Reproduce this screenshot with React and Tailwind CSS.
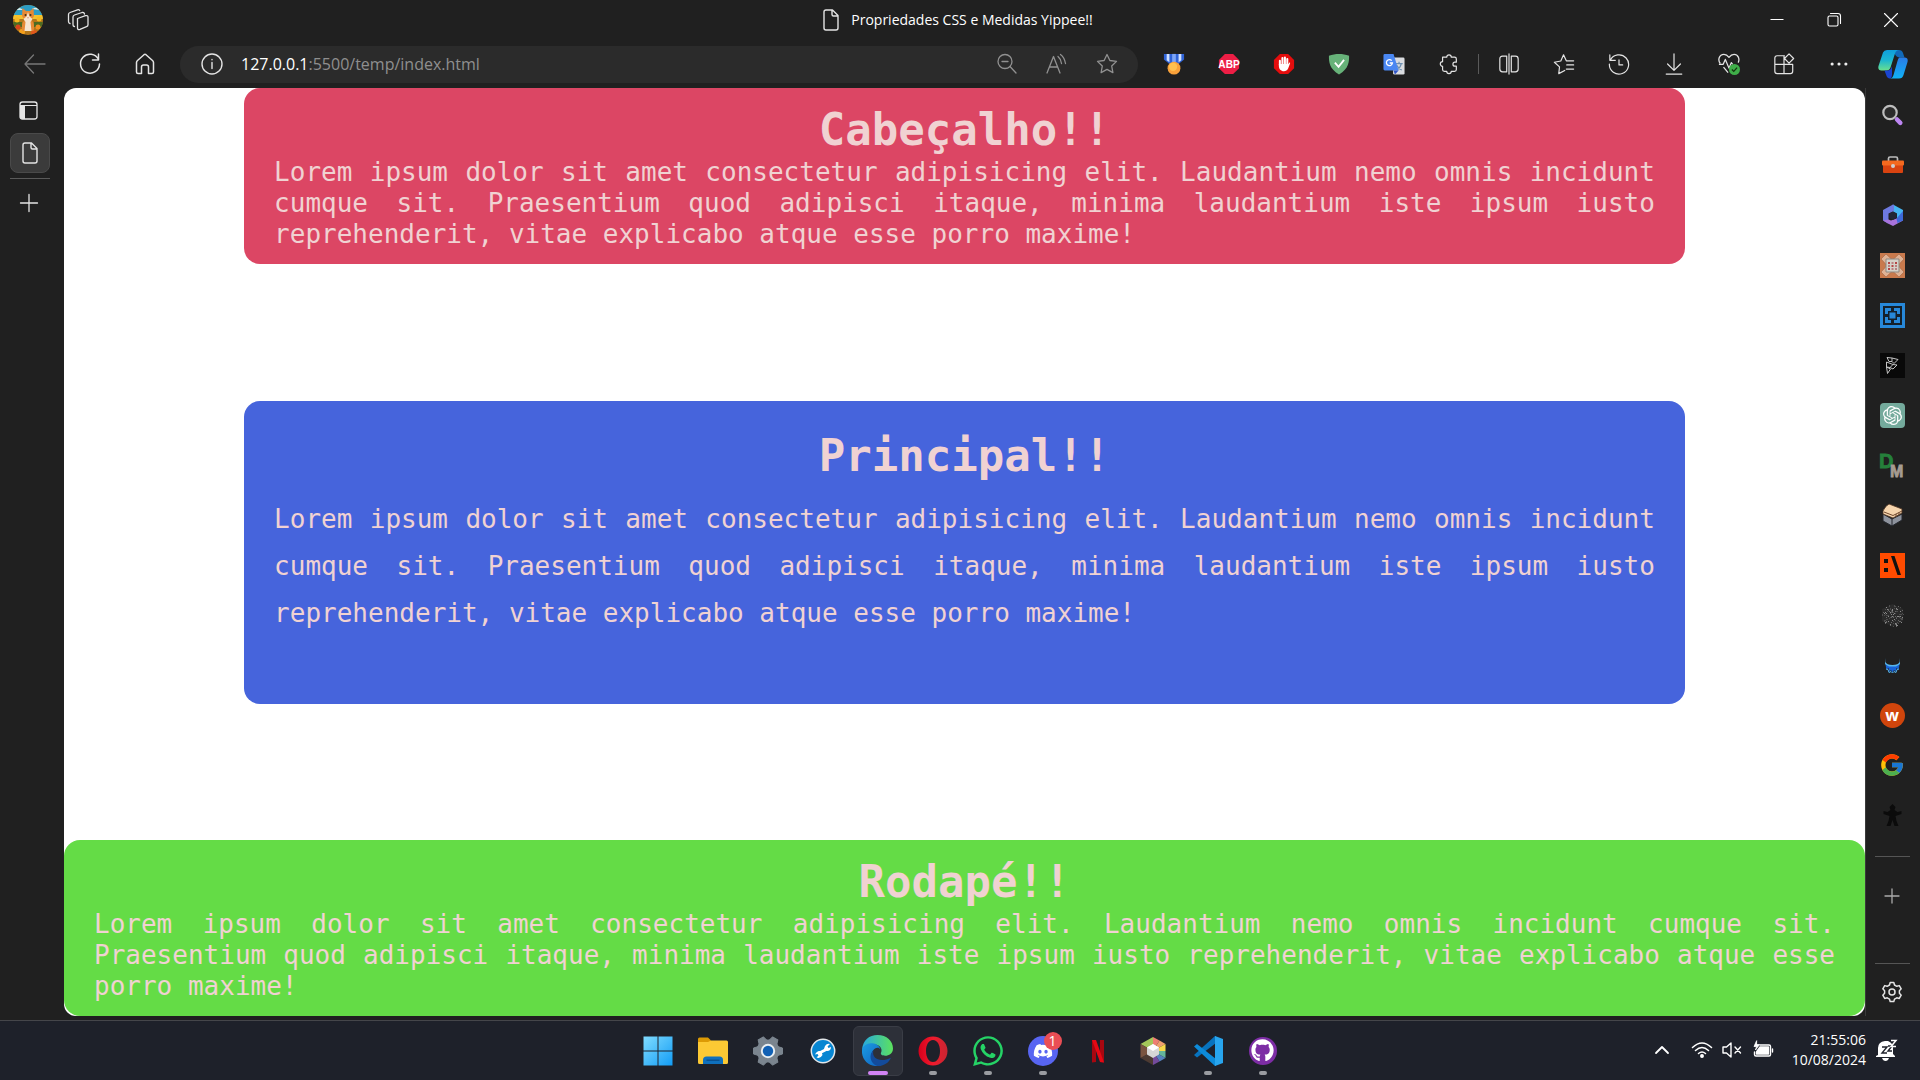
import React from "react";
import { FaWhatsapp, FaDiscord, FaGithub } from "react-icons/fa";
import { FcGoogle } from "react-icons/fc";
import { SiOpenai } from "react-icons/si";

const Line = ({ children, w = 1.3, size = "size-6", color = "text-[#e4e4e4]" }) => (
  <svg viewBox="0 0 24 24" className={`${size} ${color} shrink-0`} fill="none" stroke="currentColor" strokeWidth={w} strokeLinecap="round" strokeLinejoin="round" aria-hidden="true">
    {children}
  </svg>
);

const Art = ({ children, size = "size-6", box = "0 0 24 24" }) => (
  <svg viewBox={box} className={`${size} shrink-0`} aria-hidden="true">{children}</svg>
);

const PageIcon = () => (
  <Line w={1.4}>
    <path d="M7 2h6.500L19 7.500V20a2 2 0 0 1-2 2H7a2 2 0 0 1-2-2V4a2 2 0 0 1 2-2zM13 2v4.500a1.500 1.500 0 0 0 1.500 1.500H19" />
  </Line>
);

const STAR = "M12 2.500l2.900 6 6.600.9-4.800 4.600 1.200 6.600-5.900-3.200-5.900 3.200 1.200-6.600L2.500 9.400l6.600-.9z";
const OCTAGON = "M7.500 1h9L23 7.500v9L16.500 23h-9L1 16.500v-9z";

const extensions = [
  ["Medalha", <Art>
    <path d="M1 1h22v6l-6 5H7L1 7z" fill="#2f63d8" /><path d="M4 1h3v9L4 8zM17 1h3v7l-3 2z" fill="#cfe0ff" /><path d="M10 1h4v9h-4z" fill="#7ea5f5" />
    <circle cx="12" cy="16.500" r="7" fill="#f9a13a" /><circle cx="11" cy="15" r="4.500" fill="#ffc04e" />
  </Art>],
  ["Adblock Plus", <Art>
    <path d={OCTAGON} fill="#ed1e45" />
    <text x="12" y="16" textAnchor="middle" fontSize="11" fontWeight="700" fill="#fff" fontFamily="Liberation Sans, sans-serif">ABP</text>
  </Art>],
  ["AdBlock", <Art>
    <path d={OCTAGON} fill="#e40d0d" />
    <path d="M7.500 13V8.500M10.300 12V5.500M13 12V5M15.600 12V6.500" stroke="#fff" strokeWidth="2.200" strokeLinecap="round" />
    <path d="M6.400 12h10.300l1-1.500c.8-.3 1.300.4.8 1.100L16.500 17c-1 2-2.500 3-4.500 3-3.500 0-5.600-2.500-5.600-6z" fill="#fff" />
  </Art>],
  ["AdGuard", <Art>
    <path d="M12 1C8.500 1 4.500 1.500 1 3c0 6 0 14 11 20.500C23 17 23 9 23 3 19.500 1.500 15.500 1 12 1z" fill="#67b279" />
    <path d="M7.500 10.500l4 4.500 6-7.500" fill="none" stroke="#fff" strokeWidth="2" />
  </Art>],
  ["Google Tradutor", <Art>
    <rect x="11" y="5" width="12.500" height="18.500" rx="1.500" fill="#dadce0" />
    <path d="M13.500 11.500h8M17.500 9.500v2M20 11.500c-.7 3-2.500 5.500-5 7M15 13.500c1 2 3 4 5.500 5" stroke="#6d8fb0" fill="none" strokeWidth="1.300" />
    <path d="M2 1h9.500L17 19H2a1.500 1.500 0 0 1-1.500-1.500v-15A1.500 1.500 0 0 1 2 1z" fill="#4a87f2" /><path d="M11.500 19H17l-4 4.500z" fill="#2f55c8" />
    <path d="M9.500 8.300a3.300 3.300 0 1 0 .8 2.600H7.300" stroke="#fff" strokeWidth="1.400" fill="none" />
  </Art>],
  ["Extensões", <Line><path d="M5 4.500h4.500a2.500 2.500 0 1 1 5 0H18a2 2 0 0 1 2 2V10h-1.500a2.200 2.200 0 0 0 0 4.400H20V18a2 2 0 0 1-2 2h-3.500a2.500 2.500 0 1 1-5 0H7a2 2 0 0 1-2-2v-3.500a2.500 2.500 0 1 1 0-5z" /></Line>],
];

const tools = [
  ["Dividir tela", <Line><path d="M9.500 3.500H5Q2 3.500 2 6.500v11q0 3 3 3h4.500v-17M14.500 3.500H19q3 0 3 3v11q0 3-3 3h-4.500v-17M12 1v22" /></Line>],
  ["Favoritos", <Line><path d="M6.300 22.500l.8-7.400-5.600-5 7-1.400L11.500 2l3 6.500H22.500M15 13h7.500M14.500 17.500h8M6.300 22.500l6.500-3.500" /></Line>],
  ["Histórico", <Line><path d="M2 2v6h6M2.500 8A10.500 10.500 0 1 1 1.500 12M12 7.500V13h4" /></Line>],
  ["Downloads", <Line><path d="M12 1v17.500M5 12l7 7 7-7M3.500 23h17" /></Line>],
  ["Desempenho", <Art>
    <path d="M11 21.500l-5-6M2.500 11.500C-.5 8 1 1.500 6.500 1.500c2.500 0 4.200 1.500 5.500 3.200 1.300-1.700 3-3.200 5.500-3.200 4.500 0 6.500 5 4.500 9M1 12.500h4.500L8 7l4 9.500 2.500-6 1.500 2" stroke="#e4e4e4" strokeWidth="1.400" fill="none" strokeLinejoin="round" />
    <circle cx="18" cy="18" r="6" fill="#3fae49" /><path d="M15.200 18l2 2 3.600-4" stroke="#15340f" fill="none" strokeWidth="1.400" />
  </Art>],
  ["Aplicativos", <Line><path d="M12.500 3H4.500Q2 3 2 5.500v14.500Q2 22.500 4.500 22.500h14.500q2.500 0 2.500-2.500v-7.500M2 12.500h19.500M12 3v19.500M17.500 1l5 5-5 5-5-5z" /></Line>],
  ["Mais opções", <Art><g fill="#eee"><circle cx="4.500" cy="12" r="1.700" /><circle cx="12" cy="12" r="1.700" /><circle cx="19.500" cy="12" r="1.700" /></g></Art>],
];

const speckles = Array.from({ length: 150 }, (_, i) => {
  const a = (i * 137 + i * i * 31) % 360, r = Math.sqrt(((i * 61) % 150) / 150) * 11;
  return [Math.round(12.5 + r * Math.cos(a)), Math.round(12.5 + r * Math.sin(a)), i % 4];
});

const apps = [
  ["Pesquisar", <Art box="0 0 25 25" size="size-[25px]"><circle cx="10" cy="9.500" r="6.700" fill="#2b2b2b" stroke="#bdbdbd" strokeWidth="2.200" /><path d="M17 16.500l3.300 3.300" stroke="#bd86f2" strokeWidth="4.500" strokeLinecap="round" /></Art>],
  ["Ferramentas", <Art box="0 0 25 25" size="size-[25px]"><path d="M8.500 8V5.500q0-1.500 1.500-1.500h6q1.500 0 1.500 1.500V8" fill="none" stroke="#bcbcbc" strokeWidth="1.700" /><rect x="3" y="8" width="20" height="12" rx="1" fill="#d94310" /><rect x="2" y="7.500" width="22" height="5" rx="1" fill="#f4691f" /><circle cx="13" cy="13" r="2" fill="#cfcfcf" /></Art>],
  ["Microsoft 365", <Art box="0 0 25 25" size="size-[25px]"><path d="M13 1.500l10 5.500v7.500L17 16v-5.500L10 7z" fill="#45b5f2" /><path d="M13 1.500L3 7v10.500l5.500 3.200V10.500L14 8V2z" fill="#6d79e0" /><path d="M3 17.500l5 3 5 2.500 10-5.500V11l-5 4-7 2.500-2.500-1z" fill="#a873dc" /><path d="M23 8v9.500L17.500 20l-1-4.500z" fill="#3e69d8" /><path d="M13 8.500l3.700 2v4.300L13 17l-3.700-2.200v-4.300z" fill="#222736" /></Art>],
  ["Comandos", <Art box="0 0 25 25" size="size-[25px]"><path d="M0 0h25v25H0z" fill="#c97a4d" /><path d="M1 6l5-5 6.500 6L19 1l5 5-6 6.500 6 6.500-5 5-6.500-6L6 24l-5-5 6-6.500z" fill="#dfb295" stroke="#a96a48" strokeWidth=".7" /><path d="M6 6h13v13H6z" fill="#d5d1c8" stroke="#8d8780" /><path d="M8 9h2v2H8zM15 9h2v2h-2zM11.500 12h2v2h-2zM8 15h2v2H8z" fill="#b54444" /><path d="M11.500 9h2v2h-2zM8 12h2v2H8zM15 12h2v2h-2zM11.500 15h2v2h-2zM15 15h2v2h-2z" fill="#b98080" /></Art>],
  ["Blocos", <Art box="0 0 25 25" size="size-[25px]"><path d="M0 0h25v25H0z" fill="#2788d9" /><path d="M3 3h19v19H3z" fill="#14202b" /><path d="M5 5h6v3H8v3H5zM14 5h6v6h-3V8h-3zM5 14h3v3h3v3H5zM17 14h3v6h-6v-3h3zM9.500 9.500h6v6h-6z" fill="#2788d9" /></Art>],
  ["Editor", <Art box="0 0 25 25" size="size-[25px]"><path d="M0 0h25v25H0z" fill="#090909" /><path d="M7 4.500l5 .5v3.500H9zM12 5l6 1.500-4 4-2-2M6.500 9l6.500 2.500-3 3-3.500-.5zM13 11.500l4 .5-4 4-3-1.500M6.500 14l4 2-3 4.500z" fill="none" stroke="#c4c4c4" strokeWidth="1" strokeLinejoin="round" /></Art>],
  ["ChatGPT", <span className="grid size-[25px] place-items-center rounded bg-[#74aa9c] text-white"><SiOpenai className="size-[19px]" /></span>],
  ["DM", <Art box="-4 -4 33 33" size="size-[33px]"><g fontFamily="Liberation Sans, sans-serif" fontWeight="700" strokeWidth=".8"><text x="-1" y="15" fontSize="20" fill="#25803b" stroke="#25803b">D</text><text x="10" y="24" fontSize="16" fill="#a69c92" stroke="#a69c92">M</text></g></Art>],
  ["Pão", <Art box="0 0 25 25" size="size-[25px]"><path d="M3 11l9 5 10-5v6l-10 6-9-5z" fill="#8d929c" stroke="#24272d" /><path d="M12 16v7" stroke="#24272d" /><path d="M3 8q2-5 6-7l13 5v4l-9 5L3 11z" fill="#f6d5ad" stroke="#4c3221" strokeWidth=".8" /><path d="M4 9l9 3.500 9-4.500M16 11v3M19 9.500v3" stroke="#70482d" fill="none" /></Art>],
  ["Terminal", <Art box="0 0 25 25" size="size-[25px]"><path d="M0 0h25v25H0z" fill="#ff4b00" /><path d="M4 6h4v4H4zM4 15h4v4H4zM11 3h3.500L21 22h-3.500z" fill="#111" /></Art>],
  ["Cubo", <Art box="0 0 25 25" size="size-[25px]"><path d="M12.500 1L23 6v12l-10.500 6L2 18V6z" fill="#2b2b2b" />{speckles.map(([x, y, k], i) => <rect key={i} x={x} y={y} width="1" height="1" fill={k === 0 ? "#8b8b8b" : k === 1 ? "#666" : "#4d4d4d"} />)}</Art>],
  ["Coroa", <Art box="0 0 25 25" size="size-[25px]"><path d="M5.500 5v4q1 3 7 3t7-3V5l.5 6-3 3h-9l-3-3z" fill="#57b6ed" /><path d="M5.500 11.500l3.500 2h7l3.500-2-1 5-2-1.500-1 3.500-1.500-1.500-1.500 2.500-1.500-2.500L9.500 18.500l-1-3.500-2 1.500z" fill="#1763d8" /><path d="M6 16l2 .5 1 3 2-1 1.500 1.500 1.500-1.500 2 1 1-3 2-.5" fill="none" stroke="#57b6ed" /></Art>],
  ["W", <span className="grid size-[25px] place-items-center rounded-full bg-[#d0450c] font-['Open_Sans',sans-serif] text-base font-bold leading-4 text-white">w</span>],
  ["Google", <FcGoogle className="size-[26px]" />],
  ["Figura", <Art box="0 0 25 25" size="size-[25px]"><path d="M12.500 1l3 3-1 3 3 2 4-1v3l-6 2 1 5 2 5h-4l-2-6-2 6h-4l2-5 1-5-6-2V8l4 1 3-2-1-3z" fill="#0b0b0b" /></Art>],
];

const GEAR = "M9.500 3.500L10.200 1h3.600l.7 2.500 2.300 1.300 2.500-.7 1.900 3.200-1.800 1.900v2.600l1.800 1.900-1.900 3.200-2.500-.6-2.300 1.300-.7 2.500h-3.600l-.7-2.500-2.300-1.300-2.500.6-1.900-3.200 1.800-1.900V9.200L2.800 7.300l1.900-3.200 2.500.7z";

const taskbar = [
  ["Iniciar", <Art box="0 0 30 30" size="size-[30px]"><defs><linearGradient id="win" x1="0" y1="0" x2="1" y2="1"><stop stopColor="#80dcff" /><stop offset="1" stopColor="#129cf5" /></linearGradient></defs><path d="M.5.5h14v14H.5zM15.500.5h14v14h-14zM.5 15.500h14v14H.5zM15.500 15.500h14v14h-14z" fill="url(#win)" /></Art>],
  ["Explorador", <Art box="0 0 30 30" size="size-[30px]"><path d="M0 3q0-1.500 1.500-1.500H10l3 3V12H0z" fill="#dc9a05" /><path d="M0 6h10l3-1.500h15.500Q30 4.500 30 6v20.500q0 1.500-1.500 1.500h-27Q0 28 0 26.500z" fill="#fcc934" /><path d="M5 28v-4q0-3.500 3.500-3.500h13Q25 20.500 25 24v4z" fill="#0f70bd" /><path d="M8.500 24.200h13" stroke="#084a86" strokeWidth="1.200" /></Art>],
  ["Configurações", <Art box="0 0 30 30" size="size-[30px]"><g transform="translate(15 15)" fill="#7b858f"><circle r="11.500" />{[0, 60, 120, 180, 240, 300].map((a) => <path key={a} transform={`rotate(${a + 30})`} d="M-4.500-9.500l1.500-5h6l1.500 5z" strokeLinejoin="round" stroke="#7b858f" />)}</g><circle cx="15" cy="15" r="7.200" fill="#e9eef2" /><circle cx="15" cy="15" r="5.200" fill="#1160b4" /></Art>],
  ["Reparo", <Art box="0 0 30 30" size="size-[30px]"><circle cx="15" cy="15" r="11.700" fill="#0786d2" stroke="#e3e7ea" strokeWidth="1.500" /><path d="M10.500 17.500L20 12.500" stroke="#fff" strokeWidth="3" /><path d="M17 10q2-3 5-2l-2.500 2.500 1 1.500L23 11q0 4-4 4l-3-2zM13.500 15.500q-4-2-6.500 3l2.500-.5 1 1.500L8.500 21.500q4 1.500 6-2.500z" fill="#fff" /></Art>],
  ["Microsoft Edge", <Art box="0 0 30 30" size="size-[31px]"><defs><linearGradient id="ea"><stop stopColor="#27a8e0" /><stop offset="1" stopColor="#5ce25d" /></linearGradient><linearGradient id="eb" x1="0" y1="0" x2="1" y2="1"><stop stopColor="#1b9de2" /><stop offset="1" stopColor="#1060c0" /></linearGradient></defs><path d="M0 14C1 5 7 0 15 0c9 0 15 6 15 13 0 5-4 7-7.500 7-3 0-5-1-4-3 2-5-3-9-9-8C5 9.500 2 12 0 14z" fill="url(#ea)" /><path d="M0 14c2-5 6-6 10-6 4 0 7 3 8 6-2-3-6-2-8 2-3 6 2 13 9 13l-3 1C7 31-1 24 0 14z" fill="url(#eb)" /><path d="M11 15c-2 8 7 12 17 7-2 5-7 8-13 8-7-2-9-11-4-15z" fill="#134b9b" /></Art>, "active"],
  ["Opera", <Art box="0 0 30 30" size="size-[30px]"><defs><linearGradient id="op"><stop stopColor="#d6001c" /><stop offset=".5" stopColor="#f01b2d" /><stop offset="1" stopColor="#c82632" /></linearGradient></defs><path fillRule="evenodd" d="M15 .5a14.500 14.500 0 1 1 0 29 14.500 14.500 0 0 1 0-29zM15 4C10.500 4 8 9 8 15s2.500 11 7 11 7-5 7-11S19.500 4 15 4z" fill="url(#op)" /></Art>, "open"],
  ["WhatsApp", <FaWhatsapp className="size-[34px] text-[#25d366]" />, "open"],
  ["Discord", <span className="relative grid size-[30px] place-items-center rounded-full bg-[#5865f2] text-white"><FaDiscord className="size-5" /><span className="absolute -right-1 -top-1 grid size-[18px] place-items-center rounded-full bg-[#ea4e55] text-sm leading-none">1</span></span>, "open"],
  ["Netflix", <Art box="0 0 30 30" size="size-[30px]"><path d="M9 4h4v22l-4 .6zM17 4h4v22.600l-4-.6z" fill="#a80710" /><path d="M9 4h4l8 22.600-4-.6z" fill="#e50914" /></Art>],
  ["Cubo colorido", <Art box="0 0 30 30" size="size-[30px]"><path d="M15 1v14L2.500 8z" fill="#a4c75a" /><path d="M15 1l6.500 3.500L15 15z" fill="#ee7f72" /><path d="M21.500 4.500L27.500 8 15 15z" fill="#f0a070" /><path d="M27.500 8v7H15z" fill="#f8d84a" /><path d="M27.500 15v7L15 15z" fill="#65b49a" /><path d="M27.500 22l-6 3.500L15 15z" fill="#5681bd" /><path d="M21.500 25.500L15 29V15z" fill="#744b9c" /><path d="M15 29L2.500 22 15 15z" fill="#4c3a32" /><path d="M2.500 8L15 15 2.500 22z" fill="#7a5440" /><path d="M15 8l6 3.500v7L15 22l-6-3.500v-7z" fill="#d6d6d6" /><path d="M15 8l6 3.500-6 3.500-6-3.500z" fill="#fff" /></Art>],
  ["Visual Studio Code", <Art box="0 0 30 30" size="size-[30px]"><path d="M1 19l3 2.500L23 7V.5L22 0z" fill="#0873be" /><path d="M1 10.500L4 8l19 15v6.500L22 30z" fill="#0d8bda" /><path d="M22 0l8 3v24l-8 3z" fill="#28a5ee" /></Art>, "open"],
  ["GitHub Desktop", <span className="grid size-7 place-items-center rounded-full bg-[#7d2da5] text-white"><FaGithub className="size-[23px]" /></span>, "open"],
];

const IconButton = ({ label, children, className = "w-[55px]" }) => (
  <button type="button" aria-label={label} className={`flex h-9 shrink-0 items-center justify-center ${className}`}>{children}</button>
);

const LOREM = "Lorem ipsum dolor sit amet consectetur adipisicing elit. Laudantium nemo omnis incidunt cumque sit. Praesentium\u00a0quod adipisci itaque, minima laudantium iste ipsum iusto reprehenderit, vitae explicabo atque esse porro maxime!";

const Lorem = ({ className = "leading-[31px]" }) => (
  <p className={`text-justify text-[26px] ${className}`}>{LOREM}</p>
);

function TitleBar() {
  return (
    <div className="grid h-10 grid-cols-[1fr_auto_1fr] items-center">
      <div className="flex items-center gap-6 pl-[13px]">
        <button type="button" aria-label="Perfil">
          <Art box="0 0 30 30" size="size-[30px]">
            <clipPath id="av"><circle cx="15" cy="15" r="15" /></clipPath>
            <g clipPath="url(#av)">
              <path d="M0 0h30v30H0z" fill="#b3761a" /><path d="M0 0h30v10H0z" fill="#2c9dc4" /><path d="M2 5q4-4 8 0zM19 4q4-3 8 1z" fill="#d9eef0" />
              <path d="M0 10h30v4H0z" fill="#f2c230" /><path d="M0 17h9v5H0zM21 17h9v5h-9z" fill="#4c6b22" />
              <circle cx="4" cy="15" r="2.500" fill="#f5b921" /><circle cx="26" cy="14" r="2.500" fill="#f5b921" /><circle cx="5" cy="22" r="2.500" fill="#d8451c" /><circle cx="25" cy="22" r="2.500" fill="#f09020" /><circle cx="9" cy="27" r="3" fill="#f5a01c" /><circle cx="21" cy="28" r="3" fill="#e0571c" />
              <path d="M9.500 3l3.500 3h4l3.500-3 .5 8-2.500 4q4 5 2 11h-11q-2-6 2-11L9 11z" fill="#e58a35" /><path d="M15 7l1.500 4.500 3 2.500-2 3 1 9h-7l1-9-2-3 3-2.500z" fill="#f5e4cf" /><circle cx="12.500" cy="10" r="1" fill="#40301c" /><circle cx="17.500" cy="10" r="1" fill="#40301c" /><path d="M14 12.500h2l-1 1z" fill="#b0604a" />
            </g>
          </Art>
        </button>
        <button type="button" aria-label="Espaços de trabalho">
          <Line><path d="M10.500 10.500l8-2.800q2.500-.7 2.500 1.500v7.500q0 1.500-1.500 2l-6.500 2.700q-2.500.8-2.500-1.500zM7.500 18.500Q6 18.500 6 16.500V9q0-1.500 1.500-2L15 4.500q2-.5 2.500 1.500M3 15.500q-1.500-.3-1.500-2V6.500q0-1.500 1.500-2l7.500-2.700q1.500-.4 2.200.7" /></Line>
        </button>
      </div>
      <h1 className="flex items-center gap-2 pr-2 text-sm text-white"><PageIcon />Propriedades CSS e Medidas Yippee!!</h1>
      <div className="flex justify-end pr-px">
        <IconButton label="Minimizar" className="w-[57px]"><Art><path d="M5.500 11.500h13" stroke="#fff" strokeWidth="1" /></Art></IconButton>
        <IconButton label="Restaurar" className="w-[57px]"><Line w={1.1} color="text-white"><rect x="6" y="8" width="10" height="10" rx="1.500" /><path d="M8.500 5.500H16q2.500 0 2.500 2.500v7.500" /></Line></IconButton>
        <IconButton label="Fechar" className="w-[57px]"><Line w={1.1} color="text-white"><path d="M5.500 5.500l13 13M18.500 5.500l-13 13" /></Line></IconButton>
      </div>
    </div>
  );
}

function Toolbar() {
  return (
    <div className="flex h-12 items-center pl-[7px] pr-px">
      <IconButton label="Voltar"><Line color="text-[#777]"><path d="M22 12H2M10.500 3L2 12l8.500 9" /></Line></IconButton>
      <IconButton label="Atualizar"><Line w={1.5}><path d="M20.500 7.500A9.500 9.500 0 1 0 21.500 12M20.500 2v6h-6" /></Line></IconButton>
      <IconButton label="Início"><Line w={1.5}><path d="M3.500 10.500Q3.500 9.500 4.500 8.500L11 2.700q1-.8 2 0l6.500 5.800q1 1 1 2V20q0 1.500-1.500 1.500h-3.500V15q0-2-2-2h-3q-2 0-2 2v6.500H5Q3.500 21.500 3.500 20z" /></Line></IconButton>
      <div className="ml-2 flex h-[37px] flex-1 items-center rounded-full bg-[#2b2b2b] pl-2">
        <IconButton label="Informações do site" className="w-12"><Line w={1.4}><circle cx="12" cy="12" r="10" /><path d="M12 10.500v6M12 7.500v.2" /></Line></IconButton>
        <a href="http://127.0.0.1:5500/temp/index.html" className="flex-1 pl-[5px] text-base text-[#8f8f8f]"><span className="text-white">127.0.0.1</span>:5500/temp/index.html</a>
        <IconButton label="Zoom" className="w-[50px]"><Line color="text-[#919191]"><circle cx="10" cy="9.500" r="7" /><path d="M7 9.500h6M15 14.500l6 6.500" /></Line></IconButton>
        <IconButton label="Ler em voz alta" className="w-[50px]"><Line color="text-[#919191]"><path d="M2 21L8.500 4.500 15 21M4.500 15h8M13 4.500q3 2.500 3.500 7M15.500 2.500q4 3 5 9" /></Line></IconButton>
        <IconButton label="Favoritar" className="mr-1.5 w-[50px]"><Line color="text-[#919191]"><path d={STAR} /></Line></IconButton>
      </div>
      <div className="flex items-center pl-2">
        {extensions.map(([label, icon]) => <IconButton key={label} label={label}>{React.cloneElement(icon, { size: "size-[22px]" })}</IconButton>)}
        <span className="mx-0.5 h-5 w-px bg-[#5a5a5a]" />
        {tools.map(([label, icon]) => <IconButton key={label} label={label}>{React.cloneElement(icon, { size: "size-[22px]" })}</IconButton>)}
        <IconButton label="Copilot" className="w-[53px]">
          <Art box="0 0 30 30" size="size-[30px]">
            <defs><linearGradient id="ca" x1="0" y1="0" x2="0" y2="1"><stop stopColor="#0f9edc" /><stop offset=".5" stopColor="#1cb6d0" /><stop offset="1" stopColor="#6ae08e" /></linearGradient><linearGradient id="cb" x1="0" y1="0" x2="0" y2="1"><stop stopColor="#2a7be6" /><stop offset="1" stopColor="#10b2f6" /></linearGradient></defs>
            <path d="M16 1h5q3 0 4 3l1.500 4.500h-5q-3 0-5-4z" fill="#1169b8" />
            <path d="M5 3.500Q6 1 9 1h12q-3 0-4 3.500l-4.500 14q-1 3-4 3H3.500Q-.5 21.500.5 17z" fill="url(#ca)" />
            <path d="M6.500 21.500h3q3 0 4-3l.5-1.500v8q0 4-2 4.500-3 0-4-4z" fill="#1a45d0" />
            <path d="M21.500 8.500h5Q30.500 8.500 29.500 13l-4 13q-1 3.500-4.500 3.500h-9.500q3 0 4-3.500l4-14q.5-3 2-3.500z" fill="url(#cb)" />
          </Art>
        </IconButton>
      </div>
    </div>
  );
}

function Page() {
  return (
    <main className="flex flex-1 flex-col items-center justify-between overflow-hidden rounded-xl bg-white font-['DejaVu_Sans_Mono',monospace] text-[#f0d2d2]">
      <header className="w-4/5 rounded-2xl bg-[#dc4664] px-[30px] pb-3.5 pt-[15px]">
        <h2 className="text-center text-[44px] font-bold leading-[54px]">Cabeçalho!!</h2>
        <Lorem />
      </header>
      <section className="w-4/5 rounded-2xl bg-[#4664dc] px-[30px] pb-[67px] pt-[15px]">
        <h2 className="text-center text-[44px] font-bold leading-[80px]">Principal!!</h2>
        <Lorem className="leading-[47px]" />
      </section>
      <footer className="w-full rounded-2xl bg-[#64dc46] px-[30px] pb-3.5 pt-[15px]">
        <h2 className="text-center text-[44px] font-bold leading-[54px]">Rodapé!!</h2>
        <Lorem />
      </footer>
    </main>
  );
}

export default function App() {
  return (
    <div className="flex min-h-screen flex-col bg-[#202020] font-['Open_Sans',sans-serif]">
      <TitleBar />
      <Toolbar />
      <div className="flex flex-1 pb-1">
        <nav aria-label="Guias" className="flex w-16 shrink-0 flex-col items-start pl-2.5">
          <button type="button" aria-label="Menu de guias" className="mt-[11px] flex w-10 justify-center pr-0.5">
            <Art><rect x="3" y="3" width="17" height="17" rx="2.500" fill="none" stroke="#e4e4e4" strokeWidth="1.300" /><path d="M3 6.500h17" stroke="#e4e4e4" /><path d="M3 7h5v13H5q-2 0-2-2z" fill="#e4e4e4" /></Art>
          </button>
          <button type="button" aria-label="Propriedades CSS e Medidas Yippee!!" className="mt-2.5 grid h-10 w-10 place-items-center rounded-lg border border-[#4a4a4a] bg-[#3b3b3b]"><PageIcon /></button>
          <span className="mt-[5px] h-px w-10 bg-[#5a5a5a]" />
          <button type="button" aria-label="Nova guia" className="mt-3 flex w-10 justify-center pr-0.5"><Line><path d="M12 3.500v17M3.500 12h17" /></Line></button>
        </nav>
        <Page />
        <aside aria-label="Barra lateral" className="flex w-[55px] shrink-0 flex-col items-center border-l border-[#3a3a3a] pr-0.5 pt-0.5">
          {apps.map(([label, icon]) => <button type="button" key={label} aria-label={label} className="grid h-[50px] w-full place-items-center">{icon}</button>)}
          <span className="mt-4 h-px w-[35px] bg-[#555]" />
          <button type="button" aria-label="Personalizar" className="mt-[27px]"><Line color="text-[#aaa]"><path d="M12 5v14M5 12h14" /></Line></button>
          <span className="mt-auto h-px w-[35px] bg-[#555]" />
          <button type="button" aria-label="Configurações da barra" className="mb-3 mt-4"><Line w={1.5}><g transform="translate(0 1.500)"><path d={GEAR} /><circle cx="12" cy="10.500" r="3" /></g></Line></button>
        </aside>
      </div>
      <div className="grid h-[60px] grid-cols-[1fr_auto_1fr] items-center border-t border-[#45464a] bg-[#1e212a] text-white">
        <span />
        <div className="flex gap-[5px]">
          {taskbar.map(([label, icon, state]) => (
            <button type="button" key={label} aria-label={label} className={`relative grid size-[50px] place-items-center rounded-md border ${state === "active" ? "border-[#3a3d46] bg-[#2d3039]" : "border-transparent"}`}>
              {icon}
              {state === "active" && <span className="absolute bottom-0 h-1 w-5 rounded-full bg-[#d183f5]" />}
              {state === "open" && <span className="absolute bottom-0 h-1 w-2 rounded-full bg-[#9a9ca1]" />}
            </button>
          ))}
        </div>
        <div className="flex items-center justify-end pb-0.5 pr-[22px]">
          <button type="button" aria-label="Mostrar ícones ocultos" className="mr-4"><Line w={1.8} color="text-white"><path d="M6 15l6-6 6 6" /></Line></button>
          <button type="button" aria-label="Rede, som e bateria" className="mr-[18px] flex items-center gap-1.5">
            <Line w={1.5} color="text-white"><path d="M2.500 9.500q9.500-9 19 0M5.500 12.500q6.500-6 13 0M8.500 15.500q3.500-3 7 0" /><circle cx="12" cy="18" r="1.200" fill="currentColor" /></Line>
            <Line w={1.4} color="text-white"><path d="M3 9h3.500L11 5v14l-4.500-4H3zM15 9l5.500 6M20.500 9L15 15" /></Line>
            <Line w={1.4} color="text-white"><path d="M10 7h9q1.500 0 1.500 1.500v8q0 1.500-1.500 1.500H6q-1.500 0-1.500-1.500V14" /><path d="M10 9h8.500v7h-12v-2z" fill="currentColor" /><path d="M22.500 11v3" /><path d="M6.500 3L4 8.500h2.500L5.500 12 9.500 6.500H7z" fill="currentColor" strokeWidth=".8" /></Line>
          </button>
          <time dateTime="2024-08-10T21:55:06" className="text-right text-sm leading-5">21:55:06<br />10/08/2024</time>
          <button type="button" aria-label="Notificações" className="ml-2">
            <Art size="size-6"><path d="M4 17V10q0-6 7-7h3q5 2 5 7v6l2 2v1H2v-1z" fill="#fff" /><path d="M8 20h7q-1 3-3.500 3T8 20z" fill="#fff" /><path d="M8 9h5l-5 6h5M14 8h4l-4 5h4" fill="none" stroke="#1e212a" strokeWidth="1.400" /><path d="M17 2.500h5l-5 6h5" fill="none" stroke="#fff" strokeWidth="1.500" /></Art>
          </button>
        </div>
      </div>
    </div>
  );
}
